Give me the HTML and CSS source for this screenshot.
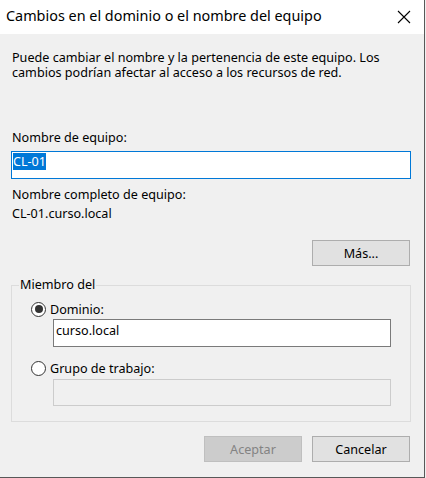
FILE: index.html
```html
<!DOCTYPE html>
<html lang="es">
<head>
<meta charset="utf-8">
<title>Cambios en el dominio o el nombre del equipo</title>
<link rel="stylesheet" href="styles.css">
</head>
<body>
<div class="dialog">
  <div class="titlebar">
    <span class="title">Cambios en el dominio o el nombre del equipo</span>
    <svg class="close" width="14" height="14" viewBox="0 0 14 14"><path d="M1 1 L13 13 M13 1 L1 13" stroke="#000" stroke-width="1.1" fill="none"/></svg>
  </div>
  <div class="content">
    <p class="desc">Puede cambiar el nombre y la pertenencia de este equipo. Los<br>cambios podrían afectar al acceso a los recursos de red.</p>
    <div class="label first">Nombre de equipo:</div>
    <div class="input focused"><span class="sel">CL-01</span></div>
    <div class="label full">Nombre completo de equipo:</div>
    <div class="value">CL-01.curso.local</div>
    <div class="more-row"><button class="btn">Más...</button></div>
    <div class="group">
      <div class="legend">Miembro del</div>
      <div class="radio-row r1"><span class="radio checked"></span><span class="rlabel">Dominio:</span></div>
      <div class="input sub">curso.local</div>
      <div class="radio-row r2"><span class="radio"></span><span class="rlabel">Grupo de trabajo:</span></div>
      <div class="input sub disabled"></div>
    </div>
    <div class="actions">
      <button class="btn disabled-btn" disabled>Aceptar</button>
      <button class="btn">Cancelar</button>
    </div>
  </div>
</div>
</body>
</html>
```
FILE: styles.css
```css
* { box-sizing: border-box; }
html, body { margin: 0; padding: 0; }
body {
  width: 426px;
  height: 478px;
  background: #f0f0f0;
  font-family: "Noto Sans", "Open Sans", sans-serif;
  font-size: 12.6px;
  color: #000;
  overflow: hidden;
}
.dialog {
  width: 425px;
  height: 478px;
  background: #f0f0f0;
  border-right: 1px solid #585858;
  border-bottom: 1px solid #585858;
  display: flex;
  flex-direction: column;
}
.titlebar {
  height: 34px;
  background: #fff;
  display: flex;
  align-items: center;
  justify-content: space-between;
  padding: 0 13px 0 6px;
  flex-shrink: 0;
}
.title {
  font-size: 14.4px;
  line-height: 20px;
  margin-top: -3px;
}
.close { display: block; margin-top: -1px; }
.content {
  padding: 16px 0 0 11px;
}
.desc {
  margin: 0 0 0 1px;
  line-height: 15px;
}
.label, .value {
  line-height: 16px;
  margin-left: 1px;
}
.label.first { margin-top: 50px; }
.input {
  width: 400px;
  height: 28px;
  background: #fff;
  border: 1px solid #7a7a7a;
  line-height: 18px;
  padding: 1px 1px 0 1px;
  white-space: nowrap;
}
.input.focused {
  margin-top: 5px;
  border-color: #0078d7;
}
.sel {
  background: #0078d7;
  color: #fff;
}
.label.full { margin-top: 8px; }
.value { margin-top: 3px; }
.more-row {
  width: 399px;
  display: flex;
  justify-content: flex-end;
  margin-top: 18px;
}
.btn {
  width: 98px;
  height: 26px;
  background: #e1e1e1;
  border: 1px solid #adadad;
  font-family: inherit;
  font-size: 12.6px;
  color: #000;
  padding: 0;
  margin: 0;
}
.group {
  width: 400px;
  height: 137px;
  margin-top: 19px;
  border: 1px solid #dcdcdc;
}
.legend {
  width: fit-content;
  margin: -9px 0 0 7px;
  padding: 0 1px;
  line-height: 16px;
  background: #f0f0f0;
}
.radio-row {
  display: flex;
  align-items: center;
  height: 16px;
  margin-left: 19px;
}
.r1 { margin-top: 8px; }
.r2 { margin-top: 13px; }
.radio {
  width: 15px;
  height: 15px;
  border-radius: 50%;
  border: 1px solid #333;
  background: #fff;
  margin-right: 4px;
  display: flex;
  align-items: center;
  justify-content: center;
  flex-shrink: 0;
}
.radio.checked::after {
  content: "";
  width: 8px;
  height: 8px;
  border-radius: 50%;
  background: #333;
}
.input.sub {
  width: 338px;
  margin: 2px 0 0 41px;
  padding: 2px 2px 0 2px;
}
.input.disabled {
  margin-top: 3px;
  height: 27px;
  background: #f0f0f0;
  border-color: #cccccc;
}
.actions {
  width: 399px;
  display: flex;
  justify-content: flex-end;
  gap: 10px;
  margin-top: 14px;
}
.disabled-btn {
  background: #cccccc;
  border-color: #bfbfbf;
  color: #838383;
}
```
